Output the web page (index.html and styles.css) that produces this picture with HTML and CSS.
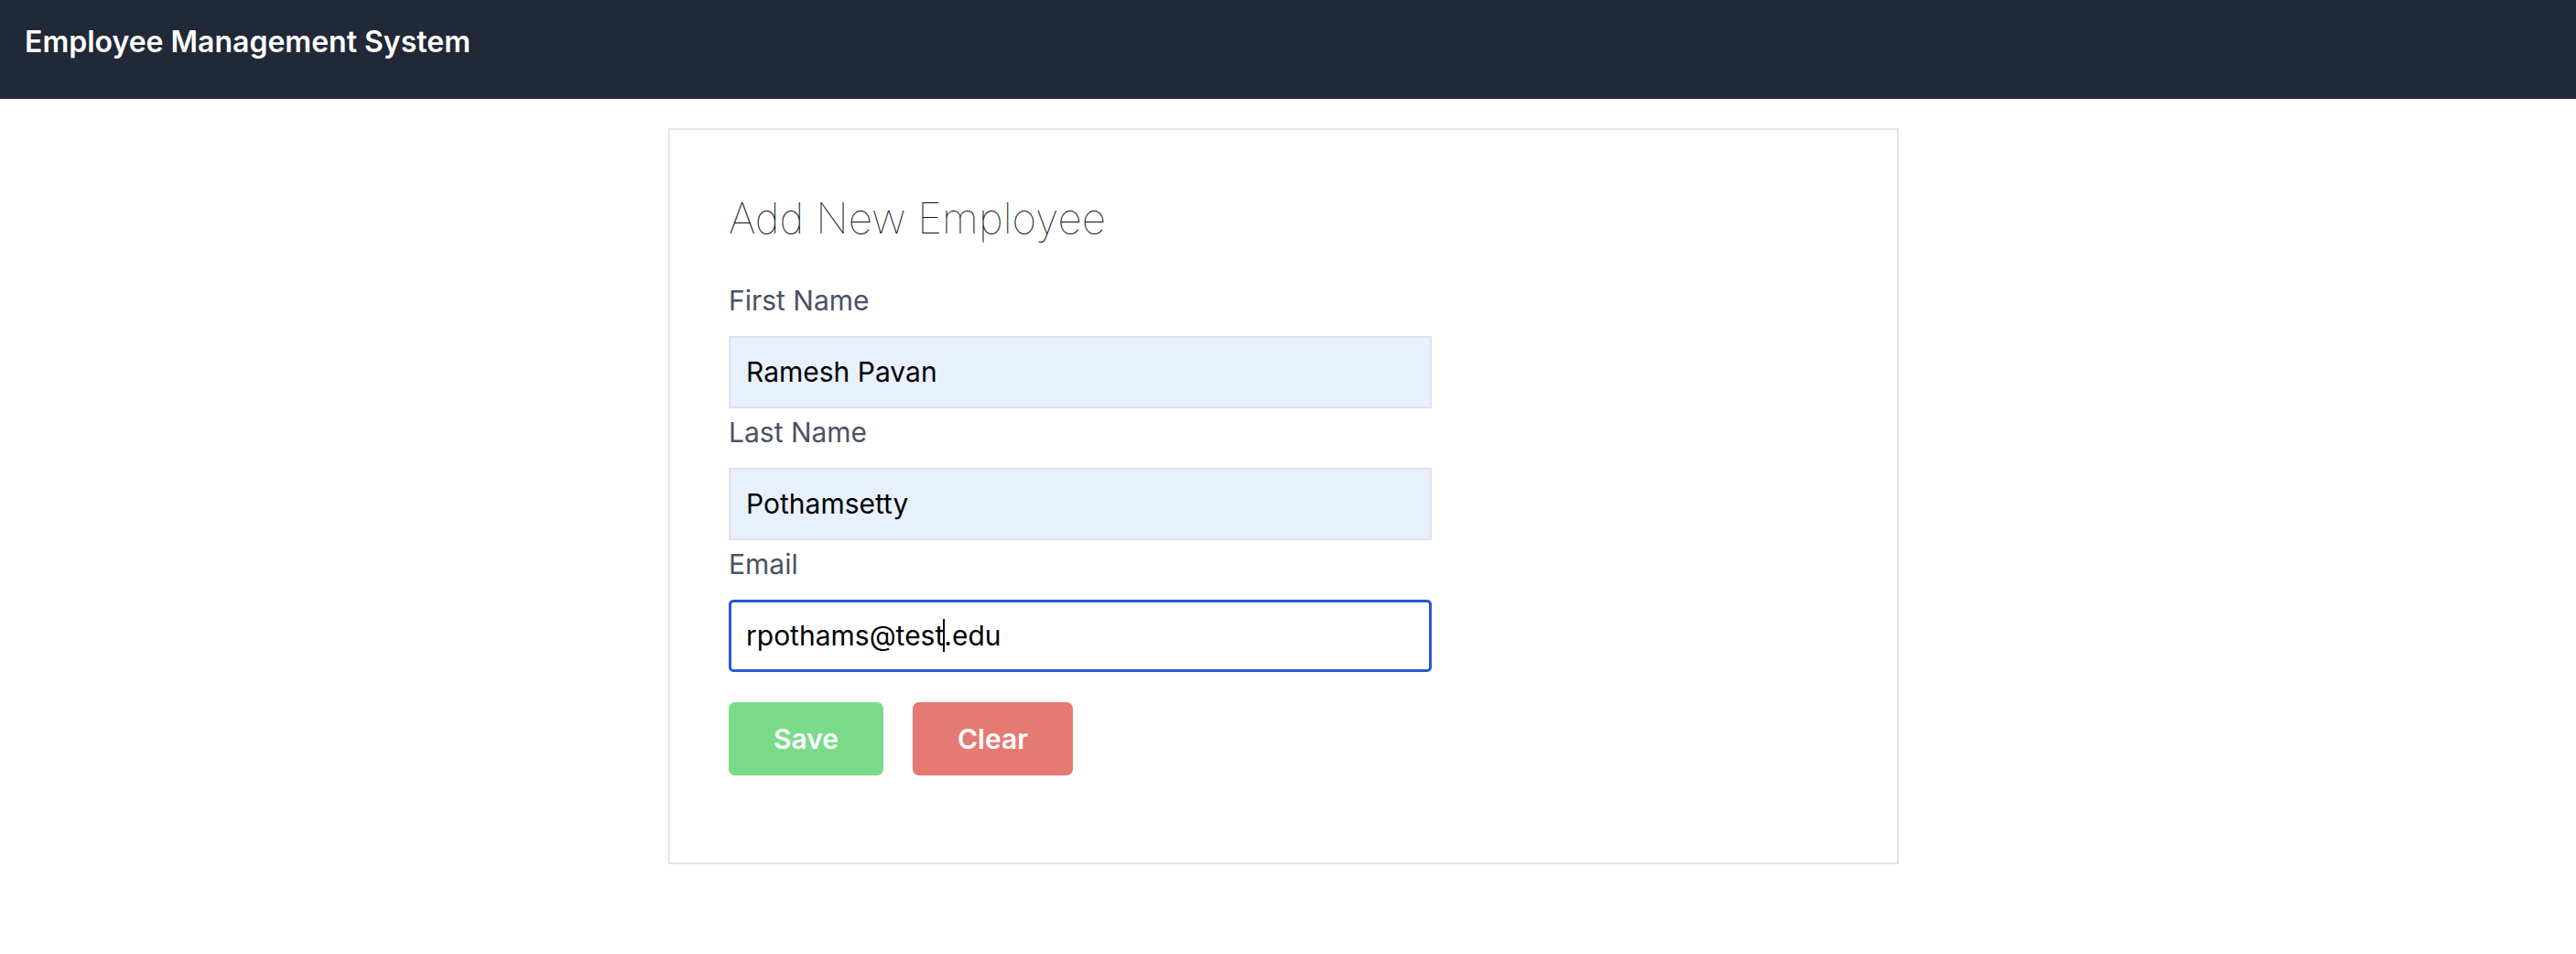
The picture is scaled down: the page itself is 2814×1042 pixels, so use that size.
FILE: index.html
```html
<!DOCTYPE html>
<html lang="en">
<head>
<meta charset="utf-8">
<title>Employee Management System</title>
<link rel="stylesheet" href="styles.css">
</head>
<body>
<header class="topbar">
  <span class="brand">Employee Management System</span>
</header>
<main class="page">
  <section class="card">
    <h2 class="card-title">Add New Employee</h2>
    <form class="form">
      <label class="label">First Name</label>
      <div class="field autofill">Ramesh Pavan</div>
      <label class="label">Last Name</label>
      <div class="field autofill">Pothamsetty</div>
      <label class="label">Email</label>
      <div class="field focused">rpothams@test<span class="caret"></span>.edu</div>
      <div class="actions">
        <button type="button" class="btn btn-save">Save</button>
        <button type="button" class="btn btn-clear">Clear</button>
      </div>
    </form>
  </section>
</main>
</body>
</html>
```

FILE: styles.css
```css
html, body {
  margin: 0;
  padding: 0;
  background: #ffffff;
  font-family: Inter, "Noto Sans", "Liberation Sans", sans-serif;
}

.topbar {
  height: 108px;
  background: #212837;
  display: flex;
  align-items: center;
  padding-left: 27px;
  box-sizing: border-box;
}

.brand {
  color: #ffffff;
  font-size: 32px;
  font-weight: 600;
  margin-top: -18px;
}

.page {
  display: flex;
  justify-content: center;
  padding: 32px 10px 0 0;
}

.card {
  width: 1344px;
  box-sizing: border-box;
  border: 2px solid #e5e5ea;
  box-shadow: 0 3px 6px rgba(0, 0, 0, 0.07);
  padding: 69px 64px 95px;
  background: #fff;
}

.card-title {
  margin: 0;
  font-size: 46px;
  font-weight: 100;
  color: #111111;
  line-height: 1.21;
}

.form {
  display: flex;
  flex-direction: column;
  margin-top: 44px;
}

.label {
  font-size: 30px;
  line-height: 35px;
  color: #4a5263;
  margin-bottom: 21px;
}

.field {
  width: 768px;
  height: 79px;
  box-sizing: border-box;
  border: 2px solid #dfe3ea;
  padding: 0 17px;
  display: flex;
  align-items: center;
  font-size: 30px;
  color: #000000;
  margin-bottom: 9px;
}

.autofill {
  background: #e8f0fe;
}

.focused {
  border: 3px solid #2859d0;
  border-radius: 5px;
  padding: 0 16px;
  background: #fff;
}

.caret {
  display: inline-block;
  width: 2px;
  height: 36px;
  background: #000;
  margin: 0 -1px;
}

.actions {
  display: flex;
  gap: 32px;
  margin-top: 24px;
}

.btn {
  height: 80px;
  border: none;
  border-radius: 7px;
  padding: 0;
  font-family: Inter, "Noto Sans", sans-serif;
  font-size: 30px;
  font-weight: 600;
  color: #ffffff;
}

.btn-save {
  background: #79db8a;
  width: 169px;
}

.btn-clear {
  background: #e57a73;
  width: 175px;
}
```
